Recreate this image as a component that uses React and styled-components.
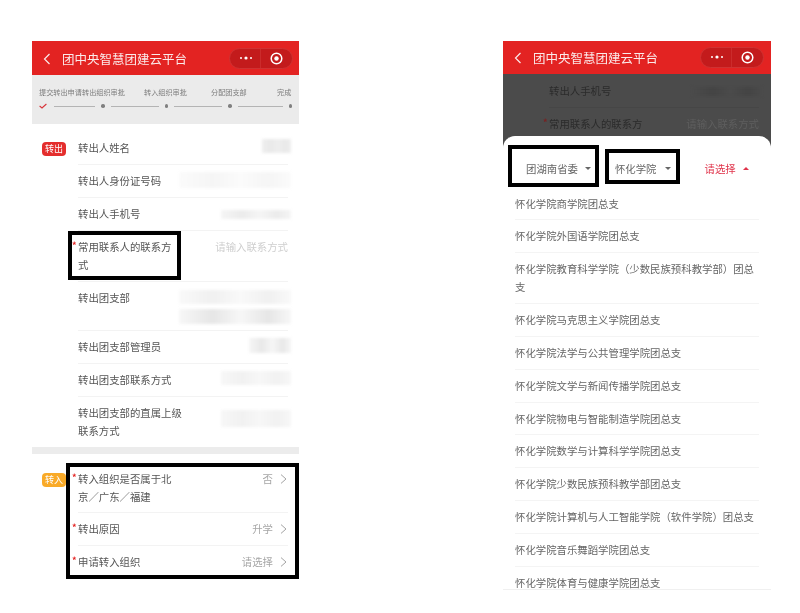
import React from 'react';
import styled, { createGlobalStyle } from 'styled-components';

const Global = createGlobalStyle`
  html, body { margin: 0; padding: 0; background: #fff; }
  body { font-family: "Noto Sans CJK SC", "Liberation Sans", sans-serif; }
`;
const Page = styled.div`
  width: 800px; height: 613px; overflow: hidden; box-sizing: border-box;
  padding: 41px 0 0 32px; display: flex; gap: 204px; align-items: flex-start;
  background: #fff;
`;
const Phone = styled.div`
  width: ${p => p.$w}px; height: ${p => p.$h}px; flex: none; overflow: hidden;
  display: flex; flex-direction: column; background: #fff; filter: blur(0.45px);
`;
const NavBar = styled.div`
  height: ${p => p.$h}px; flex: none; background: #e32322; color: #fff;
  display: flex; align-items: center; padding: 0 ${p => p.$pr}px 0 11px; position: relative; z-index: 2;
`;
const BackIcon = styled.svg`
  flex: none; margin-top: 2px; fill: none; stroke: #fbeaea; stroke-width: 1.2;
`;
const Title = styled.div`
  font-size: 12.5px; line-height: 16px; margin: 2px 0 0 11px; flex: 1; color: #fbeaea;
`;
const Capsule = styled.div`
  width: 64px; height: 21px; box-sizing: border-box; border-radius: 11px; background: #c31b1c;
  border: 1px solid #cf3232; display: flex; align-items: center;
`;
const CapsulePart = styled.div`
  flex: 1; height: 100%; display: flex; align-items: center; justify-content: center;
  & + & { box-shadow: -1px 0 0 #cb2c2c; }
`;
const Steps = styled.div`
  height: 49px; flex: none; background: #ebebeb; box-sizing: border-box; padding: 11px 0 0 7px;
  display: flex; flex-direction: column; gap: 4px;
`;
const StepLabels = styled.div`
  display: grid; grid-template-columns: 43px 62px 67px 66px auto;
  font-size: 7.15px; line-height: 12px; color: #7c7c7c; white-space: nowrap;
`;
const Track = styled.div`
  display: flex; align-items: center; height: 8px;
`;
const TrackLine = styled.div`
  width: ${p => p.$w}px; height: 1px; background: #b4b4b4; margin-left: ${p => p.$ml}px; flex: none;
`;
const TrackDot = styled.div`
  width: 3.5px; height: 3.5px; border-radius: 50%; background: #808080; margin-left: ${p => p.$ml}px; flex: none;
`;
const Section = styled.div`
  display: flex; padding-top: ${p => p.$top}px; flex: none;
`;
const TagCol = styled.div`
  width: 46px; flex: none; box-sizing: border-box; padding: ${p => p.$top}px 0 0 10px;
`;
const Tag = styled.div`
  width: 24px; height: 14px; border-radius: 4px; background: ${p => p.$color}; color: #fff;
  font-size: 9px; line-height: 14px; text-align: center; opacity: .95;
`;
const Rows = styled.div`
  flex: 1; margin-right: 11px; position: relative; min-width: 0;
`;
const Row = styled.div`
  display: flex; justify-content: space-between; align-items: flex-start; position: relative;
  padding: 7px 0 ${p => p.$pb ?? 7}px; border-bottom: 1px solid ${p => p.$last ? 'transparent' : '#f3f3f3'};
  min-height: 18px;
`;
const Label = styled.div`
  font-size: 10.4px; line-height: 18px; color: ${p => p.$dim ? '#2b2b2b' : '#555'};
  max-width: ${p => p.$required ? 99 : 105}px; flex: none; position: relative;
  ${p => p.$required && `
    &::before {
      content: "*"; position: absolute; left: -6px; top: -1px; color: ${p.$dim ? '#7a2020' : '#e32322'};
      font-size: 9px; line-height: 18px; font-weight: 700;
    }
  `}
`;
const Value = styled.div`
  display: flex; align-items: center; gap: 7px; font-size: 10.4px; line-height: 18px; white-space: nowrap;
  color: ${p => p.$color || '#a6a6a6'}; margin-right: ${p => p.$mr || 0}px;
`;
const SmearStack = styled.div`
  display: flex; flex-direction: column; align-items: flex-end; gap: ${p => p.$gap || 0}px;
  margin-right: -3px; margin-top: ${p => p.$mt || 0}px;
`;
const Smear = styled.div`
  width: ${p => p.$w}px; height: ${p => p.$h}px; filter: blur(1.5px);
  background: linear-gradient(90deg, ${p => p.$a}, ${p => p.$b} 30%, ${p => p.$a} 55%, ${p => p.$b} 80%, ${p => p.$a});
`;
const Band = styled.div`
  height: 7px; background: #ececec; flex: none;
`;
const Mark = styled.div`
  position: absolute; box-sizing: border-box; border: 4px solid #000; z-index: 3; pointer-events: none;
  left: ${p => p.$l}px; right: ${p => p.$r}px; top: ${p => p.$t}px; bottom: ${p => p.$b}px;
`;
const Dim = styled.div`
  height: 74px; flex: none; background: #4b4b4b; display: flex; overflow: hidden;
`;
const DimSpacer = styled.div`
  width: 46px; flex: none;
`;
const DimRows = styled.div`
  flex: 1; margin-right: 12px; padding-top: 1px;
`;
const DimRow = styled.div`
  display: flex; justify-content: space-between; padding: 7px 0; border-bottom: 1px solid #464646;
`;
const Sheet = styled.div`
  flex: 1; min-height: 0; margin-top: -12px; background: #fff; border-radius: 12px 12px 0 0;
  position: relative; z-index: 1; display: flex; flex-direction: column;
  &::after {
    content: ""; position: absolute; left: 0; right: 0; bottom: 4px; height: 1px; background: #f0f0f0;
  }
`;
const Filters = styled.div`
  height: 52px; flex: none; box-sizing: border-box; padding: 24px 0 0 23px; display: flex; align-items: flex-start;
`;
const Filter = styled.div`
  display: flex; align-items: center; gap: ${p => p.$gap}px; position: relative; flex: none;
  margin-right: ${p => p.$mr || 0}px; font-size: 10.4px; line-height: 18px; color: ${p => p.$color};
`;
const Caret = styled.i`
  width: 0; height: 0; border-left: 3px solid transparent; border-right: 3px solid transparent;
  border-${p => p.$up ? 'bottom' : 'top'}: 3.5px solid currentColor;
`;
const List = styled.div`
  padding: 0 12px; flex: 1; min-height: 0;
`;
const ListRow = styled.div`
  font-size: 10.4px; line-height: 18px; color: #666; padding: 7px 0 6.85px;
  border-bottom: 1px solid ${p => p.$last ? 'transparent' : '#f4f4f4'};
`;

const Back = () => (
  <BackIcon width="8" height="12" viewBox="0 0 8 12"><path d="M6.5 1 1.5 6l5 5" /></BackIcon>
);
const Chevron = () => (
  <svg width="8" height="10" viewBox="0 0 8 10" fill="none" stroke="#a3a3a3" strokeWidth="1"><path d="M1 .6 6 5 1 9.4" /></svg>
);
const Dots = () => (
  <svg width="14" height="4" viewBox="0 0 14 4" fill="#fff"><circle cx="2" cy="2" r="1" /><circle cx="7" cy="2" r="1.6" /><circle cx="12" cy="2" r="1" /></svg>
);
const Target = () => (
  <svg width="13" height="13" viewBox="0 0 13 13" fill="none"><circle cx="6.5" cy="6.5" r="5.3" stroke="#fff" strokeWidth="1.5" /><circle cx="6.5" cy="6.5" r="2.2" fill="#fff" /></svg>
);
const Check = () => (
  <svg width="8" height="6" viewBox="0 0 8 6" fill="none" stroke="#d8343a" strokeWidth="1.1" style={{ flex: 'none' }}><path d="M.6 3 3 5 7.4 1" /></svg>
);
const Nav = ({ h, pr }) => (
  <NavBar $h={h} $pr={pr}>
    <Back />
    <Title>团中央智慧团建云平台</Title>
    <Capsule>
      <CapsulePart><Dots /></CapsulePart>
      <CapsulePart><Target /></CapsulePart>
    </Capsule>
  </NavBar>
);

const schools = [
  '怀化学院商学院团总支', '怀化学院外国语学院团总支', '怀化学院教育科学学院（少数民族预科教学部）团总支',
  '怀化学院马克思主义学院团总支', '怀化学院法学与公共管理学院团总支', '怀化学院文学与新闻传播学院团总支',
  '怀化学院物电与智能制造学院团总支', '怀化学院数学与计算科学学院团总支', '怀化学院少数民族预科教学部团总支',
  '怀化学院计算机与人工智能学院（软件学院）团总支', '怀化学院音乐舞蹈学院团总支', '怀化学院体育与健康学院团总支',
];

export default function App() {
  return (
    <Page>
      <Global />
      <Phone $w={267} $h={545}>
        <Nav h={34} pr={6} />
        <Steps>
          <StepLabels>
            <span>提交转出申请</span><span>转出组织审批</span><span>转入组织审批</span><span>分配团支部</span><span>完成</span>
          </StepLabels>
          <Track>
            <Check />
            <TrackLine $w={41} $ml={7} />
            <TrackDot $ml={6} /><TrackLine $w={48} $ml={6} />
            <TrackDot $ml={6} /><TrackLine $w={48} $ml={6} />
            <TrackDot $ml={6} /><TrackLine $w={45} $ml={6} />
            <TrackDot $ml={6} />
          </Track>
        </Steps>
        <Section $top={8}>
          <TagCol $top={10}><Tag $color="#e32322">转出</Tag></TagCol>
          <Rows>
            <Row><Label>转出人姓名</Label><SmearStack><Smear $w={29} $h={14} $a="#eeeeee" $b="#e9e9e9" /></SmearStack></Row>
            <Row><Label>转出人身份证号码</Label><SmearStack><Smear $w={112} $h={16} $a="#fbfbfb" $b="#f5f5f5" /></SmearStack></Row>
            <Row><Label>转出人手机号</Label><SmearStack $mt={5}><Smear $w={70} $h={9} $a="#f5f5f5" $b="#ebebeb" /></SmearStack></Row>
            <Row>
              <Label $required>常用联系人的联系方式</Label>
              <Value $color="#cfcfcf">请输入联系方式</Value>
              <Mark $l={-10} $t={0} $r={107} $b={1} />
            </Row>
            <Row $pb={6}>
              <Label>转出团支部</Label>
              <SmearStack $gap={5} $mt={1}>
                <Smear $w={112} $h={14} $a="#f9f9f9" $b="#f0f0f0" />
                <Smear $w={112} $h={15} $a="#f7f7f7" $b="#e6e6e6" />
              </SmearStack>
            </Row>
            <Row><Label>转出团支部管理员</Label><SmearStack><Smear $w={42} $h={15} $a="#f6f6f6" $b="#e8e8e8" /></SmearStack></Row>
            <Row><Label>转出团支部联系方式</Label><SmearStack><Smear $w={70} $h={14} $a="#f7f7f7" $b="#f1f1f1" /></SmearStack></Row>
            <Row $pb={6} $last><Label>转出团支部的直属上级联系方式</Label><SmearStack $mt={6}><Smear $w={70} $h={17} $a="#f7f7f7" $b="#f1f1f1" /></SmearStack></Row>
          </Rows>
        </Section>
        <Band />
        <Section $top={9}>
          <TagCol $top={10}><Tag $color="#f9a61d">转入</Tag></TagCol>
          <Rows>
            <Row $pb={6}>
              <Label $required>转入组织是否属于北京／广东／福建</Label>
              <Value>否<Chevron /></Value>
            </Row>
            <Row><Label $required>转出原因</Label><Value>升学<Chevron /></Value></Row>
            <Row $last><Label $required>申请转入组织</Label><Value>请选择<Chevron /></Value></Row>
            <Mark $l={-12} $r={-11} $t={0} $b={0} />
          </Rows>
        </Section>
      </Phone>
      <Phone $w={268} $h={553}>
        <Nav h={32.5} pr={7} />
        <Dim>
          <DimSpacer />
          <DimRows>
            <DimRow><Label $dim>转出人手机号</Label><SmearStack $mt={5}><Smear $w={70} $h={9} $a="#4b4b4b" $b="#444" /></SmearStack></DimRow>
            <DimRow><Label $dim $required>常用联系人的联系方</Label><Value $color="#5e5e5e">请输入联系方式</Value></DimRow>
          </DimRows>
        </Dim>
        <Sheet>
          <Filters>
            <Filter $gap={7} $mr={24} $color="#666">
              团湖南省委<Caret />
              <Mark $l={-18} $r={-8} $t={-15} $b={-9} />
            </Filter>
            <Filter $gap={8} $mr={34} $color="#666">
              怀化学院<Caret />
              <Mark $l={-10} $r={-9} $t={-11} $b={-6} />
            </Filter>
            <Filter $gap={7} $color="#e0334a">
              请选择<Caret $up />
            </Filter>
          </Filters>
          <List>
            {schools.map((s, i) => <ListRow key={s} $last={i === schools.length - 1}>{s}</ListRow>)}
          </List>
        </Sheet>
      </Phone>
    </Page>
  );
}
